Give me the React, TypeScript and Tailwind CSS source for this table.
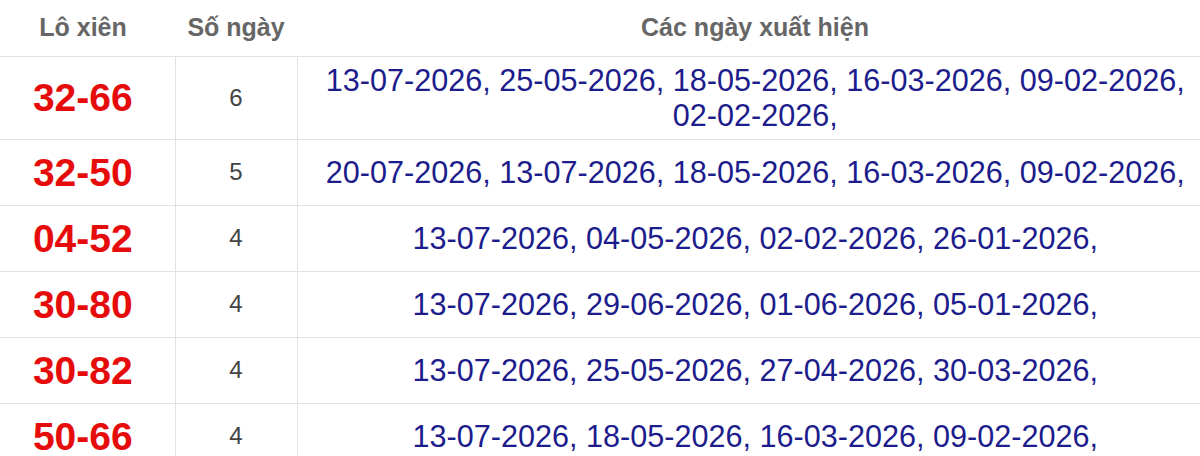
const rows: { pair: string; count: number; dates: string }[] = [
  {
    pair: "32-66",
    count: 6,
    dates: "13-07-2026, 25-05-2026, 18-05-2026, 16-03-2026, 09-02-2026, 02-02-2026,",
  },
  { pair: "32-50", count: 5, dates: "20-07-2026, 13-07-2026, 18-05-2026, 16-03-2026, 09-02-2026," },
  { pair: "04-52", count: 4, dates: "13-07-2026, 04-05-2026, 02-02-2026, 26-01-2026," },
  { pair: "30-80", count: 4, dates: "13-07-2026, 29-06-2026, 01-06-2026, 05-01-2026," },
  { pair: "30-82", count: 4, dates: "13-07-2026, 25-05-2026, 27-04-2026, 30-03-2026," },
  { pair: "50-66", count: 4, dates: "13-07-2026, 18-05-2026, 16-03-2026, 09-02-2026," },
];

export default function App() {
  return (
    <div className="w-[1200px] h-[456px] overflow-hidden bg-white font-['Liberation_Sans',Arial,sans-serif]">
      <table className="-ml-[9px] w-[1222px] border-collapse table-fixed">
        <colgroup>
          <col className="w-[184px]" />
          <col className="w-[122px]" />
          <col />
        </colgroup>
        <thead>
          <tr className="h-[56px] border-b border-[#e2e2e2]">
            <th className="text-[25px] font-bold text-[#666] text-center align-middle">Lô xiên</th>
            <th className="text-[25px] font-bold text-[#666] text-center align-middle">Số ngày</th>
            <th className="text-[25px] font-bold text-[#666] text-center align-middle">Các ngày xuất hiện</th>
          </tr>
        </thead>
        <tbody>
          {rows.map((r) => (
            <tr key={r.pair} className="border-b border-[#e2e2e2]">
              <td className="py-[6px] text-center align-middle text-[39px] leading-[53px] font-bold text-[#e60c0c]">
                {r.pair}
              </td>
              <td className="border-x border-[#e2e2e2] text-center align-middle text-[24px] text-[#444]">
                {r.count}
              </td>
              <td className="py-[6px] px-[20px] text-center align-middle text-[30.6px] leading-[35px] text-[#1c1c8c]">
                {r.dates}
              </td>
            </tr>
          ))}
        </tbody>
      </table>
    </div>
  );
}
